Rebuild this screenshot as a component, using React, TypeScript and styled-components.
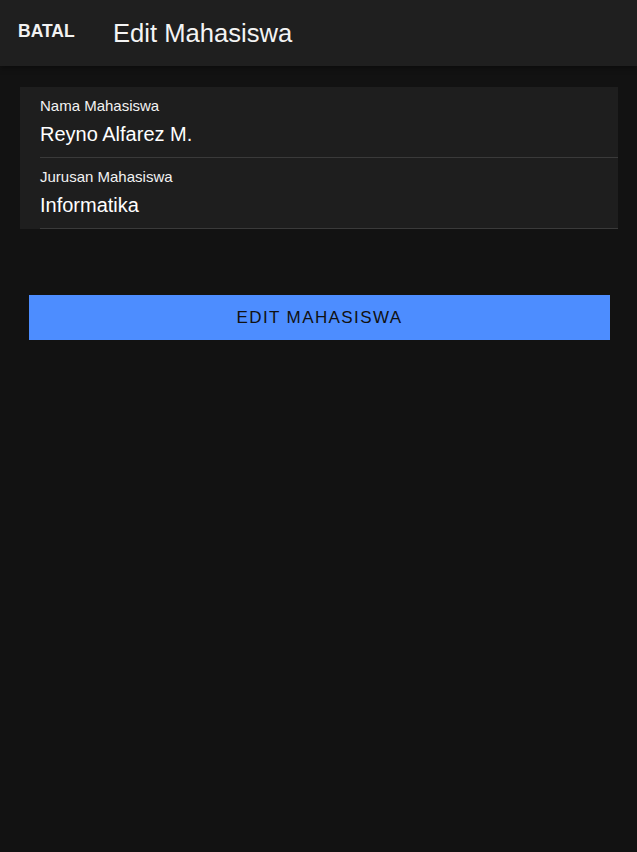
import styled, { createGlobalStyle } from 'styled-components';

const GlobalStyle = createGlobalStyle`
  html, body {
    margin: 0;
    padding: 0;
    background: #121212;
    font-family: "Liberation Sans", Arial, sans-serif;
    color: #fff;
  }
`;

const fields = [
  { label: 'Nama Mahasiswa', value: 'Reyno Alfarez M.' },
  { label: 'Jurusan Mahasiswa', value: 'Informatika' },
];

export default function App() {
  return (
    <>
      <GlobalStyle />
      <Page>
        <Toolbar>
          <CancelButton>BATAL</CancelButton>
          <Title>Edit Mahasiswa</Title>
        </Toolbar>
        <Content>
          <FieldList>
            {fields.map((f) => (
              <FieldItem key={f.label}>
                <FieldLabel>{f.label}</FieldLabel>
                <FieldValue>{f.value}</FieldValue>
              </FieldItem>
            ))}
          </FieldList>
          <SubmitButton>EDIT MAHASISWA</SubmitButton>
        </Content>
      </Page>
    </>
  );
}

// Styled Components
const Page = styled.div`
  min-height: 852px;
  background: #121212;
`;

const Toolbar = styled.header`
  height: 66px;
  background: #1f1f1f;
  display: flex;
  align-items: center;
  box-shadow: 0 2px 6px rgba(0, 0, 0, 0.35);
`;

const CancelButton = styled.button`
  background: none;
  border: none;
  color: #f2f2f2;
  font-family: inherit;
  font-size: 17.5px;
  font-weight: bold;
  padding: 0 0 3px 18px;
  width: 113px;
  text-align: left;
`;

const Title = styled.h1`
  margin: 0;
  font-size: 25.6px;
  font-weight: normal;
  color: #f4f4f4;
`;

const Content = styled.main`
  padding: 21px 19px 0 20px;
`;

const FieldList = styled.div`
  background: #1e1e1e;
`;

const FieldItem = styled.div`
  margin-left: 20px;
  height: 71px;
  border-bottom: 1px solid #3a3a3a;
  display: flex;
  flex-direction: column;
  padding-top: 11px;
  box-sizing: border-box;
`;

const FieldLabel = styled.label`
  font-size: 15px;
  color: #f2f2f2;
  line-height: 16px;
`;

const FieldValue = styled.div`
  font-size: 20px;
  color: #fff;
  margin-top: 8px;
  line-height: 24px;
`;

const SubmitButton = styled.button`
  display: block;
  margin: 66px 8px 0 9px;
  width: calc(100% - 17px);
  height: 45px;
  border: none;
  background: #4d8dff;
  color: #111;
  font-family: inherit;
  font-size: 17px;
  letter-spacing: 1.4px;
`;
